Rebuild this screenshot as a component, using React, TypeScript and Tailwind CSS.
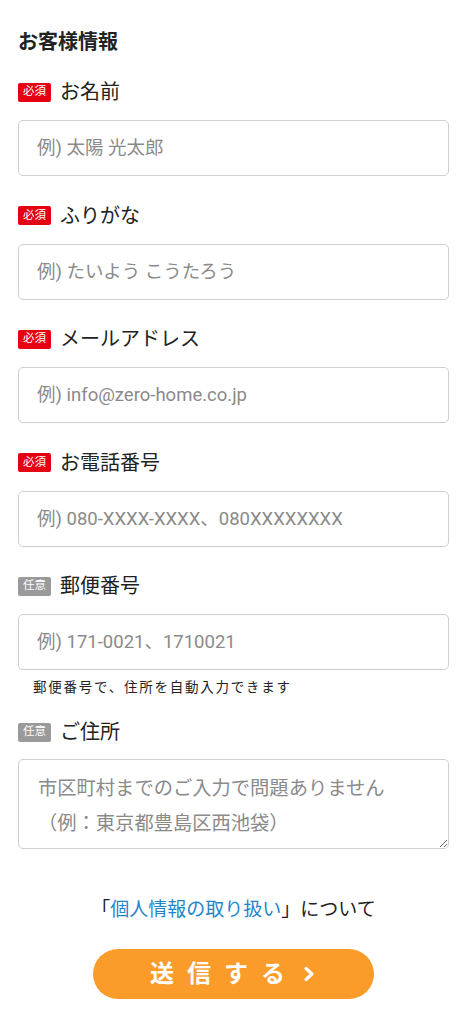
import React from "react";

const font = { fontFamily: 'Roboto, "Noto Sans CJK JP", sans-serif' };

function Badge({ required }: { required: boolean }) {
  return (
    <span
      className={`inline-flex h-[19px] w-[33px] items-center justify-center rounded-[2px] text-[11.5px] leading-none text-white ${
        required ? "bg-[#e50012]" : "bg-[#9a9a9a]"
      }`}
    >
      {required ? "必須" : "任意"}
    </span>
  );
}

function Label({ required, text }: { required: boolean; text: string }) {
  return (
    <div className="flex h-[28px] items-center gap-[9px]">
      <Badge required={required} />
      <span className="text-[20px] leading-[28px] text-[#222]">{text}</span>
    </div>
  );
}

function Field({
  required,
  label,
  placeholder,
  children,
}: {
  required: boolean;
  label: string;
  placeholder: string;
  children?: React.ReactNode;
}) {
  return (
    <div className="flex flex-col">
      <Label required={required} text={label} />
      <input
        className="mt-[14px] h-[56px] w-full rounded-[5px] border border-[#cfcfcf] bg-white pl-[18px] text-[18.5px] text-[#222] outline-none placeholder:text-[#8a8a8a]"
        style={font}
        placeholder={placeholder}
      />
      {children}
    </div>
  );
}

export default function App() {
  return (
    <div className="min-h-[1024px] bg-white pl-[18px] pr-[19px] pt-[30px]" style={font}>
      <h2 className="text-[20px] font-bold leading-[24px] text-[#222]">お客様情報</h2>
      <div className="mt-[24px] flex flex-col gap-[25.5px]">
        <Field required label="お名前" placeholder="例) 太陽 光太郎" />
        <Field required label="ふりがな" placeholder="例) たいよう こうたろう" />
        <Field required label="メールアドレス" placeholder="例) info@zero-home.co.jp" />
        <Field required label="お電話番号" placeholder="例) 080-XXXX-XXXX、080XXXXXXXX" />
        <Field required={false} label="郵便番号" placeholder="例) 171-0021、1710021">
          <p className="mt-[7px] pl-[15px] text-[13.5px] leading-[20px] tracking-[1.75px] text-[#222]">
            郵便番号で、住所を自動入力できます
          </p>
        </Field>
      </div>
      <div className="mt-[21px] flex flex-col">
        <Label required={false} text="ご住所" />
        <textarea
          className="mt-[13px] h-[90px] w-full rounded-[5px] border border-[#cfcfcf] bg-white px-[19px] pt-[11px] text-[19.3px] leading-[35px] text-[#222] outline-none placeholder:text-[#8a8a8a]"
          style={font}
          placeholder={"市区町村までのご入力で問題ありません\n（例：東京都豊島区西池袋）"}
        />
      </div>
      <p className="mt-[47px] text-center text-[19px] leading-[28px] text-[#222]">
        「<span className="text-[#1f86c8]">個人情報の取り扱い</span>」について
      </p>
      <div className="mt-[25px] flex justify-center pr-[1px]">
        <button className="flex h-[50px] w-[281px] items-center justify-center rounded-full bg-[#fb9b29] text-white">
          <span className="text-[24px] font-bold leading-none tracking-[13px]">送信する</span>
          <svg width="14" height="16" viewBox="0 0 14 16" className="ml-[4px]">
            <path d="M4 2.5 L10 8 L4 13.5" fill="none" stroke="white" strokeWidth="3.2" strokeLinecap="round" strokeLinejoin="round" />
          </svg>
        </button>
      </div>
    </div>
  );
}
